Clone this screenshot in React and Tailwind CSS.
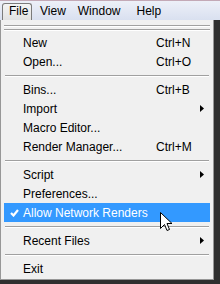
import React from 'react';

const Arrow = () => (
  <svg width="4" height="7" viewBox="0 0 4 7" className="block">
    <path d="M0 0 L4 3.5 L0 7 Z" fill="#000" />
  </svg>
);

const Check = () => (
  <svg width="9" height="8" viewBox="0 0 9 8" className="block">
    <path d="M1 4 L3.5 6.5 L8 1" stroke="#fff" strokeWidth="2.2" fill="none" />
  </svg>
);

const Cursor = () => (
  <svg width="13" height="21" viewBox="0 0 13 21" className="absolute left-[160px] top-[212px]">
    <path
      d="M0.5 0.5 L0.5 16.5 L4.5 12.5 L7 18.5 L9.5 17.5 L7 11.5 L12 11.5 Z"
      fill="#fff"
      stroke="#000"
      strokeWidth="1"
      strokeLinejoin="miter"
    />
  </svg>
);

const Item = ({ label, shortcut, sub, checked, active }) => (
  <div className={`h-[19px] mx-[3px] flex items-center ${active ? 'bg-[#3399ff] text-white' : 'text-black'}`}>
    <div className="w-[19px] flex justify-center pl-[1px]">{checked && <Check />}</div>
    <div className="w-[133px] whitespace-nowrap">{label}</div>
    <div className="flex-1 whitespace-nowrap">{shortcut}</div>
    <div className="w-[10px]">{sub && <Arrow />}</div>
  </div>
);

const Sep = () => (
  <div className="h-[9px] flex flex-col justify-center px-[4px]">
    <div className="h-px bg-[#a0a0a0]" />
    <div className="h-px bg-white" />
  </div>
);

export default function App() {
  return (
    <div className="w-[220px] h-[284px] bg-[#2f2f2f] relative overflow-hidden font-['Liberation_Sans',Arial,sans-serif] text-[12px] leading-none">
      {/* menu bar */}
      <div className="h-[20px] border-t border-[#c3a9b6] bg-gradient-to-b from-[#edf0f8] to-[#d9e0f0] flex items-end text-black">
        <div className="ml-[2px] h-[17px] w-[30px] border border-b-0 border-[#7b7b7b] rounded-t-[3px] bg-gradient-to-b from-[#f4f4f4] to-[#e2e2e2] flex items-center pl-[6px] pb-[2px]">
          File
        </div>
        <div className="h-[17px] flex items-center pb-[2px] ml-[8px]">View</div>
        <div className="h-[17px] flex items-center pb-[2px] ml-[12px]">Window</div>
        <div className="h-[17px] flex items-center pb-[2px] ml-[16px]">Help</div>
      </div>

      {/* dropdown */}
      <div className="w-[214px] h-[260px] bg-[#f0f0f0] border border-t-0 border-[#979797]">
        <div className="h-[13px] px-[3px] pt-[5px] flex flex-col gap-[2px]">
          <div className="h-px bg-[#a0a0a0] border-b border-white box-content" />
          <div className="h-px bg-[#a0a0a0] border-b border-white box-content" />
        </div>
        <Item label="New" shortcut="Ctrl+N" />
        <Item label="Open..." shortcut="Ctrl+O" />
        <Sep />
        <Item label="Bins..." shortcut="Ctrl+B" />
        <Item label="Import" sub />
        <Item label="Macro Editor..." />
        <Item label="Render Manager..." shortcut="Ctrl+M" />
        <Sep />
        <Item label="Script" sub />
        <Item label="Preferences..." />
        <Item label="Allow Network Renders" checked active />
        <Sep />
        <Item label="Recent Files" sub />
        <Sep />
        <Item label="Exit" />
      </div>

      <Cursor />
    </div>
  );
}
